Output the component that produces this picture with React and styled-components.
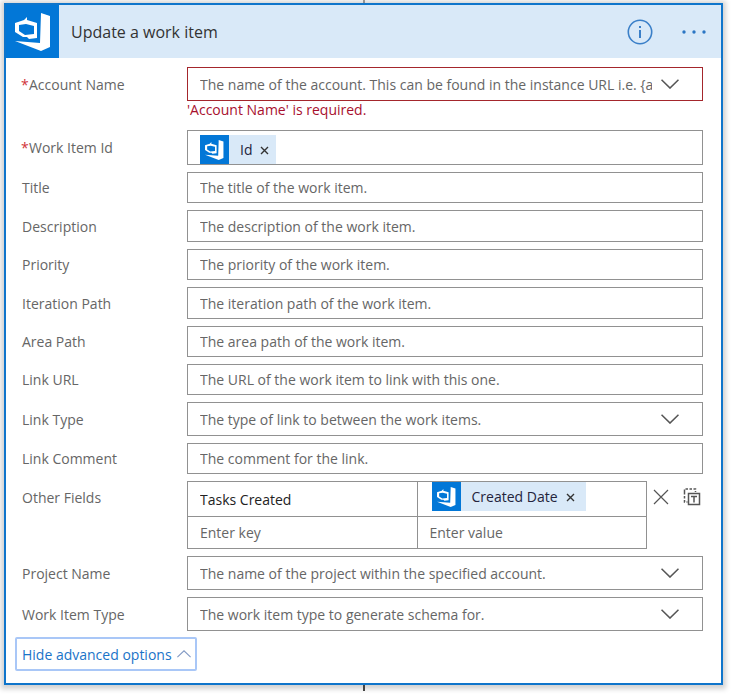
import React from "react";
import styled, { createGlobalStyle, css } from "styled-components";

const Global = createGlobalStyle`
  *, *::before, *::after { box-sizing: border-box; }
  body { margin: 0; background: #fff; }
  body, input, select, button { font-family: "Open Sans", "Noto Sans", sans-serif; font-size: 14px; }
`;

const Page = styled.main`
  padding: 0 13px 8px 4px;
  color: #666;
`;

const Connector = styled.div`
  width: 2px;
  height: ${(p) => p.$size}px;
  margin: 0 auto;
  background: ${(p) => p.$color};
`;

const Card = styled.form`
  border: 2px solid #0f75cb;
  background: #fff;
  box-shadow: 0 1px 5px 3px rgba(0, 0, 0, 0.18);
`;

const Header = styled.header`
  display: flex;
  align-items: center;
  height: 53px;
  padding-right: 14px;
  background: #d9e9f8;
`;

const Brand = styled.span`
  display: flex;
  align-items: center;
  justify-content: center;
  flex: none;
  width: ${(p) => p.$size}px;
  height: ${(p) => p.$size}px;
  background: #0277d7;
`;

const Title = styled.h1`
  flex: 1;
  margin: 0 0 0 12px;
  font-size: 16px;
  font-weight: 400;
  color: #333;
`;

const IconButton = styled.button`
  display: flex;
  padding: 0;
  border: 0;
  background: none;
  color: ${(p) => p.$color || "#555"};
`;

const HeaderActions = styled.div`
  display: flex;
  align-items: center;
  gap: 28px;
`;

const Fields = styled.div`
  display: flex;
  flex-direction: column;
  gap: 7px;
  padding: 9px 18px 6px 16px;
`;

const Row = styled.div`
  display: grid;
  grid-template-columns: 165px minmax(0, 1fr);
`;

const Label = styled.label`
  display: flex;
  align-items: center;
  height: ${(p) => p.$size}px;
`;

const Star = styled.span`
  width: 8px;
  margin-left: -1px;
  color: #d13438;
`;

const Control = styled.div`
  position: relative;
  min-width: 0;
`;

const box = css`
  width: 100%;
  height: ${(p) => p.$size}px;
  border: 1px solid ${(p) => (p.$invalid ? "#a4262c" : "#919191")};
  border-radius: 0;
  background: #fff;
`;

const TextInput = styled.input`
  ${box}
  padding: 0 12px;
  &::placeholder { color: #666; opacity: 1; }
`;

const Select = styled.select`
  ${box}
  appearance: none;
  padding: 0 50px 0 12px;
  color: #666;
  text-overflow: clip;
`;

const Arrow = styled.span`
  position: absolute;
  top: 0;
  right: 24px;
  display: flex;
  align-items: center;
  height: 34px;
  pointer-events: none;
`;

const ErrorText = styled.p`
  height: 22px;
  margin: 0;
  line-height: 18px;
  color: #a80f2e;
`;

const TokenBox = styled.div`
  ${box}
  display: flex;
  align-items: flex-end;
  padding: 0 12px;
`;

const Token = styled.span`
  display: flex;
  align-items: center;
  flex: none;
  height: 29px;
  background: #d9e9f8;
  color: #24243c;
`;

const TokenName = styled.span`
  margin: 0 8px 0 11px;
`;

const TokenRemove = styled(IconButton)`
  padding-top: 2px;
  margin-right: ${(p) => p.$space}px;
`;

const BareInput = styled.input`
  flex: 1;
  width: 0;
  min-width: 0;
  height: 100%;
  padding: 0;
  border: 0;
  outline: 0;
  background: none;
  color: #222;
  &::placeholder { color: #666; opacity: 1; }
`;

const Pairs = styled.div`
  display: flex;
  align-items: flex-start;
`;

const PairGrid = styled.div`
  display: grid;
  flex: 1;
  grid-template-columns: 1fr 1fr;
  grid-template-rows: 34px 31px;
  gap: 1px;
  padding: 1px;
  background: #919191;
`;

const PairCell = styled.div`
  display: flex;
  align-items: flex-start;
  min-width: 0;
  padding: 0 ${(p) => (p.$token ? 14 : 12)}px;
  background: #fff;
`;

const PairActions = styled.div`
  display: flex;
  align-items: center;
  justify-content: space-between;
  width: 56px;
  height: 32px;
  padding: 0 2px 0 6px;
`;

const Footer = styled.footer`
  padding: 0 9px 12px;
`;

const Toggle = styled.button`
  display: flex;
  align-items: center;
  gap: 5px;
  height: 34px;
  padding: 0 4px 0 5px;
  border: 2px solid #a9c7f7;
  border-radius: 2px;
  background: #fff;
  color: #1a73c8;
`;

function Logo({ width, height }) {
  return (
    <svg width={width} height={height} viewBox="0 0 36 38" fill="#fff" aria-hidden="true">
      <path fillRule="evenodd" d="M0 10 9 7 12 4V7L22 10V25L14 26 12 24 8 24 0 19ZM4 12V18L10 22 19 21V13L11 11Z" />
      <path d="m26 0 9 3v31l-9 4L0 28l25 2Z" />
    </svg>
  );
}

function Chevron({ up, color = "#555", size = 18 }) {
  return (
    <svg width={size} height={up ? 8 : 10} viewBox="0 0 18 10" preserveAspectRatio="none" fill="none" stroke={color} strokeWidth={up ? 1.4 : 1.6} aria-hidden="true">
      <path d={up ? "M.5 9 9 1l8.500 8" : "M.5.7 9 9l8.500-8.300"} />
    </svg>
  );
}

function TokenChip({ name, space }) {
  return (
    <Token>
      <Brand $size={29}><Logo width={19} height={20} /></Brand>
      <TokenName>{name}</TokenName>
      <TokenRemove type="button" aria-label={`Remove ${name}`} $color="#333" $space={space}>
        <svg width="9" height="9" viewBox="0 0 9 9" stroke="currentColor" strokeWidth="1.400"><path d="m1 1 7 7m0-7-7 7" /></svg>
      </TokenRemove>
    </Token>
  );
}

function Field({ id, label, size, required, children }) {
  return (
    <Row>
      <Label htmlFor={id} $size={size}>
        {required && <Star>*</Star>}
        {label}
      </Label>
      <Control>{children}</Control>
    </Row>
  );
}

function TextField({ id, label, hint, size = 31 }) {
  return (
    <Field id={id} label={label} size={size}>
      <TextInput id={id} placeholder={hint} $size={size} />
    </Field>
  );
}

function SelectField({ id, label, hint, required, error }) {
  return (
    <Field id={id} label={label} size={34} required={required}>
      <Select id={id} $size={34} $invalid={!!error} aria-invalid={!!error}>
        <option>{hint}</option>
      </Select>
      <Arrow><Chevron /></Arrow>
      {error && <ErrorText>{error}</ErrorText>}
    </Field>
  );
}

export default function App() {
  return (
    <>
      <Global />
      <Page>
        <Connector $size={3} $color="#a5a5a5" />
        <Card>
          <Header>
            <Brand $size={53}><Logo width={36} height={38} /></Brand>
            <Title>Update a work item</Title>
            <HeaderActions>
              <IconButton type="button" aria-label="Information" $color="#3a7fc8">
                <svg width="26" height="26" viewBox="0 0 26 26" fill="none" stroke="currentColor" strokeWidth="1.600">
                  <circle cx="13" cy="13" r="11.700" />
                  <path d="M13 11v8M13 7v2" strokeWidth="2" />
                </svg>
              </IconButton>
              <IconButton type="button" aria-label="More options" $color="#2b76c4">
                <svg width="26" height="6" viewBox="0 0 26 6" fill="currentColor">
                  <circle cx="3" cy="3" r="1.700" /><circle cx="13" cy="3" r="1.700" /><circle cx="23" cy="3" r="1.700" />
                </svg>
              </IconButton>
            </HeaderActions>
          </Header>
          <Fields>
            <SelectField id="account" label="Account Name" required error="'Account Name' is required." hint="The name of the account. This can be found in the instance URL i.e. {account}.visualstudio.com" />
            <Field id="item-id" label="Work Item Id" size={34} required>
              <TokenBox $size={35}>
                <TokenChip name="Id" space={7} />
                <BareInput id="item-id" />
              </TokenBox>
            </Field>
            <TextField id="title" label="Title" hint="The title of the work item." />
            <TextField id="description" label="Description" hint="The description of the work item." size={32} />
            <TextField id="priority" label="Priority" hint="The priority of the work item." />
            <TextField id="iteration" label="Iteration Path" hint="The iteration path of the work item." size={32} />
            <TextField id="area" label="Area Path" hint="The area path of the work item." />
            <TextField id="link-url" label="Link URL" hint="The URL of the work item to link with this one." />
            <SelectField id="link-type" label="Link Type" hint="The type of link to between the work items." />
            <TextField id="comment" label="Link Comment" hint="The comment for the link." />
            <Field id="key-1" label="Other Fields" size={32}>
              <Pairs>
                <PairGrid>
                  <PairCell><BareInput id="key-1" defaultValue="Tasks Created" /></PairCell>
                  <PairCell $token>
                    <TokenChip name="Created Date" space={11} />
                    <BareInput aria-label="Value" />
                  </PairCell>
                  <PairCell><BareInput aria-label="Key" placeholder="Enter key" /></PairCell>
                  <PairCell><BareInput aria-label="New value" placeholder="Enter value" /></PairCell>
                </PairGrid>
                <PairActions>
                  <IconButton type="button" aria-label="Delete">
                    <svg width="16" height="16" viewBox="0 0 16 16" stroke="currentColor" strokeWidth="1.200"><path d="m1 1 14 14m0-14L1 15" /></svg>
                  </IconButton>
                  <IconButton type="button" aria-label="Switch to text mode">
                    <svg width="18" height="18" viewBox="0 0 18 18" fill="none" stroke="currentColor" strokeWidth="1.500">
                      <path d="M1.500 4V1h11v3M1.500 4v10h3" strokeDasharray="2.500 1.500" />
                      <path d="M5.500 5.500h11v11h-11zM8 8.500h6M11 8.500v6" />
                    </svg>
                  </IconButton>
                </PairActions>
              </Pairs>
            </Field>
            <SelectField id="project" label="Project Name" hint="The name of the project within the specified account." />
            <SelectField id="item-type" label="Work Item Type" hint="The work item type to generate schema for." />
          </Fields>
          <Footer>
            <Toggle type="button">
              Hide advanced options
              <Chevron up color="#8199c4" size={14} />
            </Toggle>
          </Footer>
        </Card>
        <Connector $size={6} $color="#444" />
      </Page>
    </>
  );
}
